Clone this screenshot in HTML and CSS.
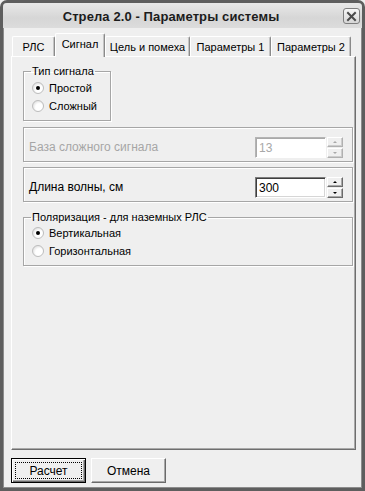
FILE: index.html
```html
<!DOCTYPE html>
<html lang="ru">
<head>
<meta charset="utf-8">
<title>Стрела 2.0 - Параметры системы</title>
<link rel="stylesheet" href="styles.css">
</head>
<body>
<div class="window">
  <div class="titlebar">
    <span class="title">Стрела 2.0 - Параметры системы</span>
    <span class="close">
      <svg width="11" height="11" viewBox="0 0 11 11"><path d="M2 2 L9 9 M9 2 L2 9" stroke="#4a4a4a" stroke-width="2" stroke-linecap="square" fill="none"/></svg>
    </span>
  </div>
  <div class="client">
    <div class="tabs">
      <div class="tab t1">РЛС</div>
      <div class="tab t2 active">Сигнал</div>
      <div class="tab t3">Цель и помеха</div>
      <div class="tab t4">Параметры 1</div>
      <div class="tab t5">Параметры 2</div>
    </div>
    <div class="panel">
      <fieldset class="group g-type">
        <legend>Тип сигнала</legend>
        <div class="radio-row"><span class="radio checked"></span><span>Простой</span></div>
        <div class="radio-row"><span class="radio"></span><span>Сложный</span></div>
      </fieldset>

      <div class="group field-row disabled">
        <span class="label">База сложного сигнала</span>
        <div class="spin">
          <div class="edit">13</div>
          <div class="spin-btns">
            <div class="sbtn up"><span class="arr-up"></span></div>
            <div class="sbtn down"><span class="arr-down"></span></div>
          </div>
        </div>
      </div>

      <div class="group field-row second">
        <span class="label">Длина волны, см</span>
        <div class="spin">
          <div class="edit">300</div>
          <div class="spin-btns">
            <div class="sbtn up"><span class="arr-up"></span></div>
            <div class="sbtn down"><span class="arr-down"></span></div>
          </div>
        </div>
      </div>

      <fieldset class="group g-pol">
        <legend>Поляризация - для наземных РЛС</legend>
        <div class="radio-row"><span class="radio checked"></span><span>Вертикальная</span></div>
        <div class="radio-row"><span class="radio"></span><span>Горизонтальная</span></div>
      </fieldset>
    </div>
    <div class="buttons">
      <div class="btn default"><span class="focus">Расчет</span></div>
      <div class="btn">Отмена</div>
    </div>
  </div>
</div>
</body>
</html>
```
FILE: styles.css
```css
* { box-sizing: border-box; }
html, body { margin: 0; padding: 0; }
body {
  width: 365px;
  height: 491px;
  overflow: hidden;
  background: #efefef;
  font-family: "Liberation Sans", Arial, sans-serif;
  font-size: 11px;
  color: #000;
}
.window {
  width: 365px;
  height: 491px;
  border: 3px solid #5e5e5e;
  border-radius: 7px 7px 0 0;
  background: #efefef;
  box-shadow: inset 0 0 0 1px #8c8c8c;
  display: flex;
  flex-direction: column;
}
.titlebar {
  height: 25px;
  position: relative;
  display: flex;
  align-items: center;
  justify-content: center;
  padding-right: 23px;
  background: linear-gradient(#e8e8e8, #d6d6d6 60%, #dcdcdc);
  border-radius: 4px 4px 0 0;
}
.title {
  font-weight: bold;
  font-size: 13px;
  letter-spacing: 0.1px;
  color: #1c1c1c;
  padding-top: 1px;
}
.close {
  position: absolute;
  right: 2px;
  top: 5px;
  width: 17px;
  height: 16px;
  border: 1px solid #7e7e7e;
  border-radius: 3px;
  background: linear-gradient(#f6f6f6, #d6d6d6);
  display: flex;
  align-items: center;
  justify-content: center;
}
.close svg { display: block; }
.client {
  padding: 5px 6px 5px 8px;
  display: flex;
  flex-direction: column;
}
.tabs {
  height: 23px;
  display: flex;
  align-items: flex-end;
  padding-left: 1px;
  position: relative;
  z-index: 1;
}
.tab {
  height: 20px;
  display: flex;
  align-items: center;
  justify-content: center;
  border-top: 1px solid #fff;
  border-left: 1px solid #fff;
  border-right: 1px solid #8a8a8a;
  box-shadow: inset -1px 0 0 #c4c4c4;
  border-radius: 2px 2px 0 0;
  background: #efefef;
  white-space: nowrap;
}
.t1 { width: 43px; }
.t2 { width: 50px; }
.t3 { width: 85px; }
.t4 { width: 81px; }
.t5 { width: 80px; }
.tab.active {
  height: 24px;
  margin-bottom: -1px;
  padding-bottom: 3px;
}
.panel {
  height: 394px;
  border-top: 1px solid #fff;
  border-left: 1px solid #fff;
  border-right: 1px solid #6e6e6e;
  border-bottom: 1px solid #6e6e6e;
  box-shadow: inset -1px -1px 0 #a9a9a9;
  padding: 8px 2px 0 11px;
}
.group {
  margin: 0;
  border: 1px solid #a6a6a6;
  box-shadow: 1px 1px 0 #fff, inset 1px 1px 0 #fff;
}
fieldset.group {
  min-width: 0;
  padding: 0 5px 5px 8px;
}
legend {
  padding: 0 1px;
  margin-left: -1px;
  line-height: 13px;
}
.g-type { width: 88px; }
.g-type .radio-row:first-of-type { margin-top: 1px; }
.radio-row {
  height: 18px;
  display: flex;
  align-items: center;
  gap: 5px;
  white-space: nowrap;
}
.radio {
  width: 12px;
  height: 12px;
  border-radius: 50%;
  border: 1px solid #bdbdbd;
  background: radial-gradient(circle at 62% 62%, #ffffff 40%, #e0e0e0 78%, #cacaca);
  display: flex;
  align-items: center;
  justify-content: center;
  flex: none;
}
.radio.checked::after {
  content: "";
  width: 4px;
  height: 4px;
  border-radius: 50%;
  background: #000;
}
.field-row {
  height: 35px;
  margin-top: 6px;
  display: flex;
  align-items: flex-start;
  justify-content: space-between;
  padding: 9px 9px 0 5px;
}
.field-row.second { margin-top: 5px; }
.field-row .label { line-height: 21px; font-size: 12px; }
.disabled .label { color: #a6a6a6; }
.spin { display: flex; gap: 1px; }
.edit {
  width: 71px;
  height: 21px;
  background: #fff;
  border-top: 1px solid #7c7c7c;
  border-left: 1px solid #7c7c7c;
  border-right: 1px solid #fff;
  border-bottom: 1px solid #fff;
  box-shadow: inset 1px 1px 0 #3e3e3e, inset -1px -1px 0 #d6d6d6;
  padding: 2px 0 0 3px;
  font-size: 12px;
  line-height: 16px;
}
.disabled .edit {
  color: #a8a8a8;
  border-top-color: #b4b4b4;
  border-left-color: #b4b4b4;
  box-shadow: inset 1px 1px 0 #a9a9a9;
}
.spin-btns {
  width: 16px;
  display: flex;
  flex-direction: column;
  gap: 1px;
}
.sbtn {
  height: 10px;
  background: #efefef;
  border-top: 1px solid #fff;
  border-left: 1px solid #fff;
  border-right: 1px solid #6a6a6a;
  border-bottom: 1px solid #6a6a6a;
  box-shadow: inset -1px -1px 0 #a8a8a8;
  display: flex;
  align-items: center;
  justify-content: center;
}
.arr-up, .arr-down {
  width: 0;
  height: 0;
  border-left: 2px solid transparent;
  border-right: 2px solid transparent;
}
.arr-up { border-bottom: 2px solid #000; }
.arr-down { border-top: 2px solid #000; }
.disabled .arr-up { border-bottom-color: #a8a8a8; }
.disabled .arr-down { border-top-color: #a8a8a8; }
.disabled .sbtn { border-right-color: #b0b0b0; border-bottom-color: #b0b0b0; box-shadow: inset -1px -1px 0 #cdcdcd; }
.g-pol {
  margin-top: 9px;
  padding-bottom: 5px;
}
.buttons {
  margin-top: 8px;
  display: flex;
  gap: 5px;
}
.btn {
  width: 75px;
  height: 25px;
  display: flex;
  align-items: center;
  justify-content: center;
  background: #efefef;
  border-top: 1px solid #fff;
  border-left: 1px solid #fff;
  border-right: 1px solid #6a6a6a;
  border-bottom: 1px solid #6a6a6a;
  box-shadow: inset -1px -1px 0 #a8a8a8;
  font-size: 12px;
}
.btn.default {
  border: 1px solid #000;
  box-shadow: inset 1px 1px 0 #fff, inset -1px -1px 0 #6a6a6a, inset -2px -2px 0 #a8a8a8;
  padding: 3px;
}
.focus {
  flex: 1;
  align-self: stretch;
  display: flex;
  align-items: center;
  justify-content: center;
  border: 1px dotted #000;
}
```
